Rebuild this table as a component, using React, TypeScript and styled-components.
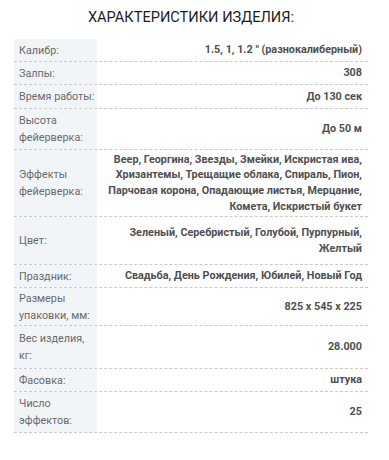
import styled, { createGlobalStyle } from "styled-components";

const GlobalStyle = createGlobalStyle`
  body {
    margin: 0;
    background: #ffffff;
    font-family: Roboto, "Liberation Sans", Arial, sans-serif;
  }
`;

const Wrapper = styled.div`
  width: 354px;
  margin-left: 14px;
  padding-top: 9px;
`;

const Title = styled.h2`
  margin: 0 0 13px;
  font-size: 14.6px;
  font-weight: 400;
  line-height: 17px;
  color: #1e1e1e;
  text-align: center;
  text-transform: uppercase;
`;

const Table = styled.div`
  display: flex;
  flex-direction: column;
`;

const Row = styled.div<{ $h: number }>`
  display: grid;
  grid-template-columns: 83px 1fr;
  height: ${(p) => p.$h}px;
  box-sizing: border-box;
  border-bottom: 1px dashed #c9c9c9;
  font-size: 10.8px;
`;

const Label = styled.div`
  display: flex;
  align-items: center;
  padding: 0 0 0 5px;
  background: #f2f5f8;
  color: #6a6a6a;
  line-height: 17px;
`;

const Value = styled.div`
  display: flex;
  align-items: center;
  justify-content: flex-end;
  padding: 0 6px 0 8px;
  text-align: right;
  font-weight: 700;
  color: #505050;
  line-height: 15.6px;
  white-space: pre-line;
`;

const specs: { label: string; value: string; h: number }[] = [
  { label: "Калибр:", value: "1.5, 1, 1.2 \" (разнокалиберный)", h: 23 },
  { label: "Залпы:", value: "308", h: 23 },
  { label: "Время работы:", value: "До 130 сек", h: 24 },
  { label: "Высота фейерверка:", value: "До 50 м", h: 41 },
  {
    label: "Эффекты фейерверка:",
    value:
      "Веер, Георгина, Звезды, Змейки, Искристая ива,\nХризантемы, Трещащие облака, Спираль, Пион,\nПарчовая корона, Опадающие листья, Мерцание,\nКомета, Искристый букет",
    h: 67,
  },
  {
    label: "Цвет:",
    value: "Зеленый, Серебристый, Голубой, Пурпурный,\nЖелтый",
    h: 48,
  },
  { label: "Праздник:", value: "Свадьба, День Рождения, Юбилей, Новый Год", h: 23 },
  { label: "Размеры упаковки, мм:", value: "825 x 545 x 225", h: 38 },
  { label: "Вес изделия, кг:", value: "28.000", h: 43 },
  { label: "Фасовка:", value: "штука", h: 23 },
  { label: "Число эффектов:", value: "25", h: 41 },
];

export default function App() {
  return (
    <>
      <GlobalStyle />
      <Wrapper>
        <Title>Характеристики изделия:</Title>
        <Table>
          {specs.map(({ label, value, h }) => (
            <Row key={label} $h={h}>
              <Label>{label}</Label>
              <Value>{value}</Value>
            </Row>
          ))}
        </Table>
      </Wrapper>
    </>
  );
}
